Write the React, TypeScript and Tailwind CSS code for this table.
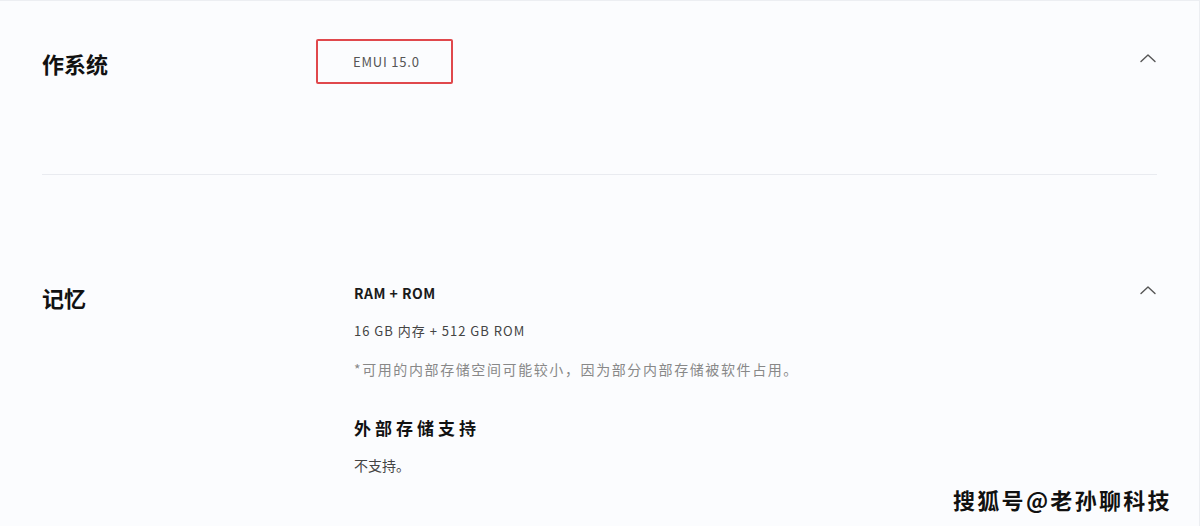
import React from "react";

function ChevronUp() {
  return (
    <svg width="16" height="10" viewBox="0 0 16 10" fill="none">
      <path d="M1 8.5 L8 2 L15 8.5" stroke="#555" strokeWidth="1.4" strokeLinecap="round" strokeLinejoin="round" />
    </svg>
  );
}

export default function App() {
  const font = { fontFamily: '"Noto Sans CJK SC", "Noto Sans", sans-serif' };
  return (
    <div className="relative w-[1200px] h-[526px] overflow-hidden bg-[#fbfcfe] border-t border-r border-[#eceef2]" style={font}>
      <div className="px-[42px]">
        <div className="flex h-[174px] border-b border-[#e9ebf0]">
          <div className="w-[274px] pt-[47px] text-[22px] font-bold text-[#111] leading-[30px]">作系统</div>
          <div className="flex-1 pt-[38px]">
            <div className="w-[137px] h-[45px] border-2 border-[#e0484c] rounded-[2px] flex items-center pl-[35px] text-[13px] text-[#555] tracking-[0.8px]">EMUI 15.0</div>
          </div>
          <div className="pt-[52px] pr-[1px]"><ChevronUp /></div>
        </div>
        <div className="flex pt-[103px]">
          <div className="w-[312px] pt-[4px] text-[22px] font-bold text-[#111] leading-[30px]">记忆</div>
          <div className="flex-1 flex flex-col">
            <div className="text-[14px] font-bold text-[#1a1a1a] leading-[18px] mt-[6px] tracking-[0.5px]">RAM + ROM</div>
            <div className="text-[13px] text-[#444] leading-[18px] mt-[20px] tracking-[1px]">16 GB 内存 + 512 GB ROM</div>
            <div className="text-[14px] text-[#888] leading-[18px] mt-[20px] tracking-[1.6px]">*可用的内部存储空间可能较小，因为部分内部存储被软件占用。</div>
            <div className="text-[17px] font-bold text-[#111] leading-[22px] mt-[39px] tracking-[4px]">外部存储支持</div>
            <div className="text-[14px] text-[#444] leading-[18px] mt-[17px]">不支持。</div>
          </div>
          <div className="pt-[7px] pr-[1px]"><ChevronUp /></div>
        </div>
      </div>
      <div
        className="absolute left-[953px] top-[484px] text-[22px] font-bold text-[#111] leading-[28px] tracking-[2.3px]"
        style={{ textShadow: "1px 1px 0 #fff, -1px 0 0 #fff" }}
      >
        搜狐号@老孙聊科技
      </div>
    </div>
  );
}
